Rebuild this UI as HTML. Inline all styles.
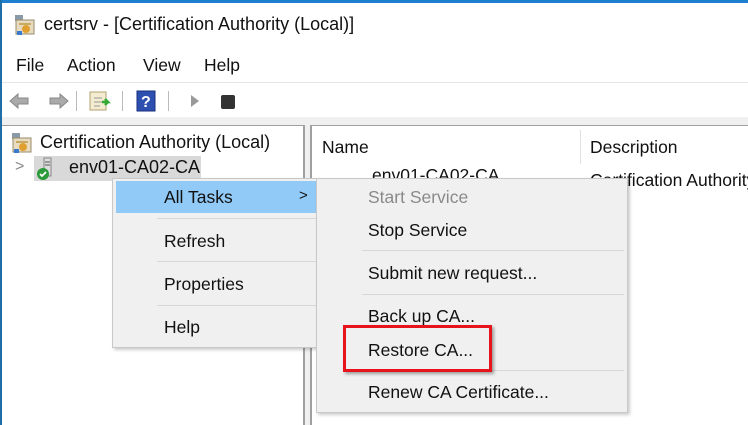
<!DOCTYPE html>
<html><head><style>
*{margin:0;padding:0;box-sizing:border-box}
body{width:748px;height:425px;overflow:hidden;background:#fff;font-family:"Liberation Sans",sans-serif;font-size:16px;color:#111;position:relative}
.a{position:absolute;white-space:nowrap}
</style></head><body>
<div class="a" style="left:0;top:0;width:748px;height:3px;background:#1e7fd0"></div>
<div class="a" style="left:0;top:0;width:2px;height:425px;background:#1e6fa8"></div>
<!-- title -->
<svg class="a" style="left:14px;top:14px" width="22" height="22"><rect x="1" y="1" width="8" height="6" fill="#8a9aa8"/><rect x="2" y="6" width="18" height="14" fill="#e8dcc0" stroke="#9a8a6a"/><rect x="5" y="9" width="12" height="2" fill="#c9a860"/><circle cx="12" cy="15" r="4" fill="#e0a030"/><rect x="3" y="17" width="5" height="4" fill="#3a7ad0"/></svg>
<div class="a" style="left:44px;top:14px;font-size:18px">certsrv - [Certification Authority (Local)]</div>
<!-- menu -->
<div class="a" style="left:16px;top:55px;font-size:17.5px">File</div>
<div class="a" style="left:67px;top:55px;font-size:17.5px">Action</div>
<div class="a" style="left:143px;top:55px;font-size:17.5px">View</div>
<div class="a" style="left:204px;top:55px;font-size:17.5px">Help</div>
<div class="a" style="left:2px;top:82px;width:746px;height:1px;background:#e6e6e6"></div>
<!-- toolbar -->
<svg class="a" style="left:8px;top:90px" width="240" height="22">
<path d="M2 11 L10 4 V8 H20 V14 H10 V18 Z" fill="#aaa" stroke="#888"/>
<path d="M60 11 L52 4 V8 H42 V14 H52 V18 Z" fill="#aaa" stroke="#888"/>
<rect x="68" y="1" width="1" height="20" fill="#bbb"/>
<rect x="82" y="2" width="16" height="18" fill="#f3ecd0" stroke="#b0a070"/><path d="M86 8h8M86 12h8M86 16h6" stroke="#999"/><path d="M94 12h6l-3-3m3 3l-3 3" stroke="#3a3" stroke-width="2.5" fill="none"/>
<rect x="114" y="1" width="1" height="20" fill="#bbb"/>
<rect x="129" y="1" width="18" height="20" fill="#2c4fb0" stroke="#1a2f80"/><text x="133" y="17" fill="#fff" font-size="16" font-weight="bold" font-family="Liberation Sans">?</text>
<rect x="160" y="1" width="1" height="20" fill="#bbb"/>
<path d="M183 5 L191 11 L183 17 Z" fill="#999"/>
<rect x="213" y="5" width="14" height="14" rx="2" fill="#333"/>
</svg>
<div class="a" style="left:2px;top:117px;width:746px;height:8px;background:#f0f0f0"></div>
<!-- left tree panel -->
<div class="a" style="left:2px;top:125px;width:303px;height:300px;border-right:2px solid #a0a0a0;border-top:1px solid #a0a0a0"></div>
<div class="a" style="left:305px;top:125px;width:5px;height:300px;background:#f0f0f0"></div>
<svg class="a" style="left:11px;top:132px" width="22" height="22"><rect x="1" y="1" width="8" height="6" fill="#8a9aa8"/><rect x="2" y="6" width="18" height="14" fill="#e8dcc0" stroke="#9a8a6a"/><rect x="5" y="9" width="12" height="2" fill="#c9a860"/><circle cx="12" cy="15" r="4" fill="#e0a030"/><rect x="3" y="17" width="5" height="4" fill="#3a7ad0"/></svg>
<div class="a" style="left:40px;top:132px;font-size:18px">Certification Authority (Local)</div>
<div class="a" style="left:34px;top:156px;width:167px;height:25px;background:#d9d9d9"></div>
<div class="a" style="left:15px;top:158px;color:#888;font-size:16px">&gt;</div>
<svg class="a" style="left:36px;top:157px" width="22" height="24"><rect x="8" y="1" width="7" height="18" fill="#ddd" stroke="#888"/><path d="M9 5h5M9 8h5" stroke="#555"/><circle cx="7" cy="17" r="6" fill="#2a9a3a"/><path d="M4 17l2 2 4-4" stroke="#fff" stroke-width="1.8" fill="none"/></svg>
<div class="a" style="left:69px;top:157px;font-size:18px">env01-CA02-CA</div>
<!-- right panel -->
<div class="a" style="left:310px;top:125px;width:438px;height:300px;border-left:2px solid #a0a0a0;border-top:1px solid #a0a0a0"></div>
<div class="a" style="left:322px;top:137px;font-size:17.5px">Name</div>
<div class="a" style="left:580px;top:130px;width:1px;height:34px;background:#e0e0e0"></div>
<div class="a" style="left:590px;top:137px;font-size:17.5px">Description</div>
<div class="a" style="left:372px;top:165px;font-size:17.5px">env01-CA02-CA</div>
<div class="a" style="left:590px;top:170px;font-size:17.5px">Certification Authority</div>
<!-- context menu 1 -->
<div class="a" style="left:112px;top:178px;width:205px;height:170px;background:#f0f0f0;border:1px solid #c8c8c8;box-shadow:2px 2px 3px rgba(0,0,0,.2)"></div>
<div class="a" style="left:116px;top:181px;width:201px;height:32px;background:#91c9f7"></div>
<div class="a" style="left:157px;top:218px;width:160px;height:1px;background:#d8d8d8"></div>
<div class="a" style="left:157px;top:261px;width:160px;height:1px;background:#d8d8d8"></div>
<div class="a" style="left:157px;top:305px;width:160px;height:1px;background:#d8d8d8"></div>
<div class="a" style="left:164px;top:187px;font-size:17.5px">All Tasks</div>
<div class="a" style="left:299px;top:187px;font-size:15px">&gt;</div>
<div class="a" style="left:164px;top:231px;font-size:17.5px">Refresh</div>
<div class="a" style="left:164px;top:274px;font-size:17.5px">Properties</div>
<div class="a" style="left:164px;top:317px;font-size:17.5px">Help</div>
<!-- submenu -->
<div class="a" style="left:316px;top:178px;width:312px;height:235px;background:#f0f0f0;border:1px solid #c8c8c8;box-shadow:2px 2px 3px rgba(0,0,0,.2)"></div>
<div class="a" style="left:362px;top:250px;width:262px;height:1px;background:#d8d8d8"></div>
<div class="a" style="left:362px;top:294px;width:262px;height:1px;background:#d8d8d8"></div>
<div class="a" style="left:362px;top:370px;width:262px;height:1px;background:#d8d8d8"></div>
<div class="a" style="left:368px;top:187px;font-size:17.5px;color:#8a8a8a">Start Service</div>
<div class="a" style="left:368px;top:220px;font-size:17.5px">Stop Service</div>
<div class="a" style="left:368px;top:263px;font-size:17.5px">Submit new request...</div>
<div class="a" style="left:368px;top:306px;font-size:17.5px">Back up CA...</div>
<div class="a" style="left:368px;top:340px;font-size:17.5px">Restore CA...</div>
<div class="a" style="left:368px;top:382px;font-size:17.5px">Renew CA Certificate...</div>
<div class="a" style="left:343px;top:325px;width:149px;height:47px;border:3px solid #e8141c;box-shadow:2px 2px 3px rgba(0,0,0,.35)"></div>
</body></html>
